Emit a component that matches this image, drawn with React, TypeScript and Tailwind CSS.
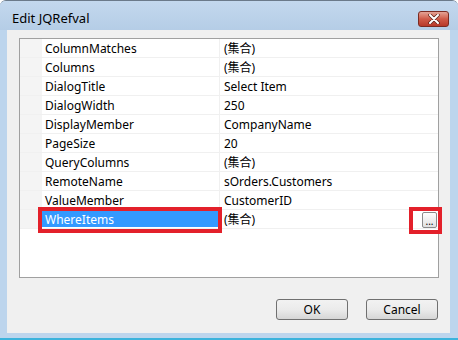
import React from "react";

const rows: [string, string][] = [
  ["ColumnMatches", "(集合)"],
  ["Columns", "(集合)"],
  ["DialogTitle", "Select Item"],
  ["DialogWidth", "250"],
  ["DisplayMember", "CompanyName"],
  ["PageSize", "20"],
  ["QueryColumns", "(集合)"],
  ["RemoteName", "sOrders.Customers"],
  ["ValueMember", "CustomerID"],
  ["WhereItems", "(集合)"],
];

const font = {
  fontFamily: '"Noto Sans", "Noto Sans CJK TC", sans-serif',
};

export default function App() {
  return (
    <div
      className="relative w-[458px] h-[340px] overflow-hidden bg-[#bdd5ed] border-t border-[#6b7a8a] rounded-tl-[6px] rounded-tr-[6px] text-[12px] text-black"
      style={font}
    >
      {/* title bar */}
      <div className="h-[29px] flex items-center justify-between pl-[12px] pr-[9px] bg-gradient-to-b from-[#c3d8ee] to-[#b5cde6]">
        <span className="text-[13px] leading-none mt-[5px]">Edit JQRefval</span>
        <div className="w-[31px] h-[16px] mt-[7px] rounded-[3px] border border-[#7b2b22] bg-gradient-to-b from-[#e3a396] via-[#cf5a48] to-[#b8392a] flex items-center justify-center">
          <svg width="12" height="10" viewBox="0 0 12 10">
            <path d="M2 1 L10 9 M10 1 L2 9" stroke="#5a2018" strokeWidth="3.4" strokeLinecap="round" />
            <path d="M2 1 L10 9 M10 1 L2 9" stroke="#ffffff" strokeWidth="2" strokeLinecap="round" />
          </svg>
        </div>
      </div>

      {/* client area */}
      <div className="ml-[7px] mr-[8px] h-[303px] bg-[#f0f0f0] flex flex-col">
        <div className="mt-[8px] ml-[12px] w-[420px] h-[240px] border border-[#a0a0a0] bg-white flex flex-col">
          {rows.map(([name, value], i) => {
            const selected = i === rows.length - 1;
            return (
              <div key={name} className="flex h-[19px] border-b border-[#f0f0f0]">
                <div className="w-[22px] bg-[#f4f4f4]" />
                <div
                  className={
                    "w-[178px] border-r border-[#f0f0f0] flex items-center pl-[3px] pt-[1px] " +
                    (selected ? "bg-[#3399ff] text-white my-[1px]" : "")
                  }
                >
                  {name}
                </div>
                <div className="flex-1 flex items-center justify-between pl-[4px] pr-[1px] pt-[1px]">
                  <span>{value}</span>
                  {selected && (
                    <div className="w-[15px] h-[16px] border border-[#8a8a8a] rounded-[2px] bg-gradient-to-b from-[#ffffff] to-[#e0e0e0] flex items-end justify-center leading-none text-[10px] pb-[1px]">
                      ...
                    </div>
                  )}
                </div>
              </div>
            );
          })}
        </div>

        <div className="mt-[21px] mr-[12px] flex justify-end gap-[18px]">
          <button className="w-[72px] h-[21px] border border-[#707070] rounded-[3px] bg-gradient-to-b from-[#f2f2f2] via-[#ebebeb] to-[#d6d6d6] text-[12px] leading-none">
            OK
          </button>
          <button className="w-[72px] h-[21px] border border-[#707070] rounded-[3px] bg-gradient-to-b from-[#f2f2f2] via-[#ebebeb] to-[#d6d6d6] text-[12px] leading-none">
            Cancel
          </button>
        </div>
      </div>

      {/* bottom accent line */}
      <div className="absolute left-0 right-0 bottom-0 h-[2px] bg-[#3cb3dc]" />

      {/* annotation boxes */}
      <div className="absolute left-[38px] top-[206px] w-[184px] h-[26px] border-[4px] border-[#e3202a]" />
      <div className="absolute left-[409px] top-[206px] w-[33px] h-[27px] border-[4px] border-[#e3202a]" />
    </div>
  );
}
